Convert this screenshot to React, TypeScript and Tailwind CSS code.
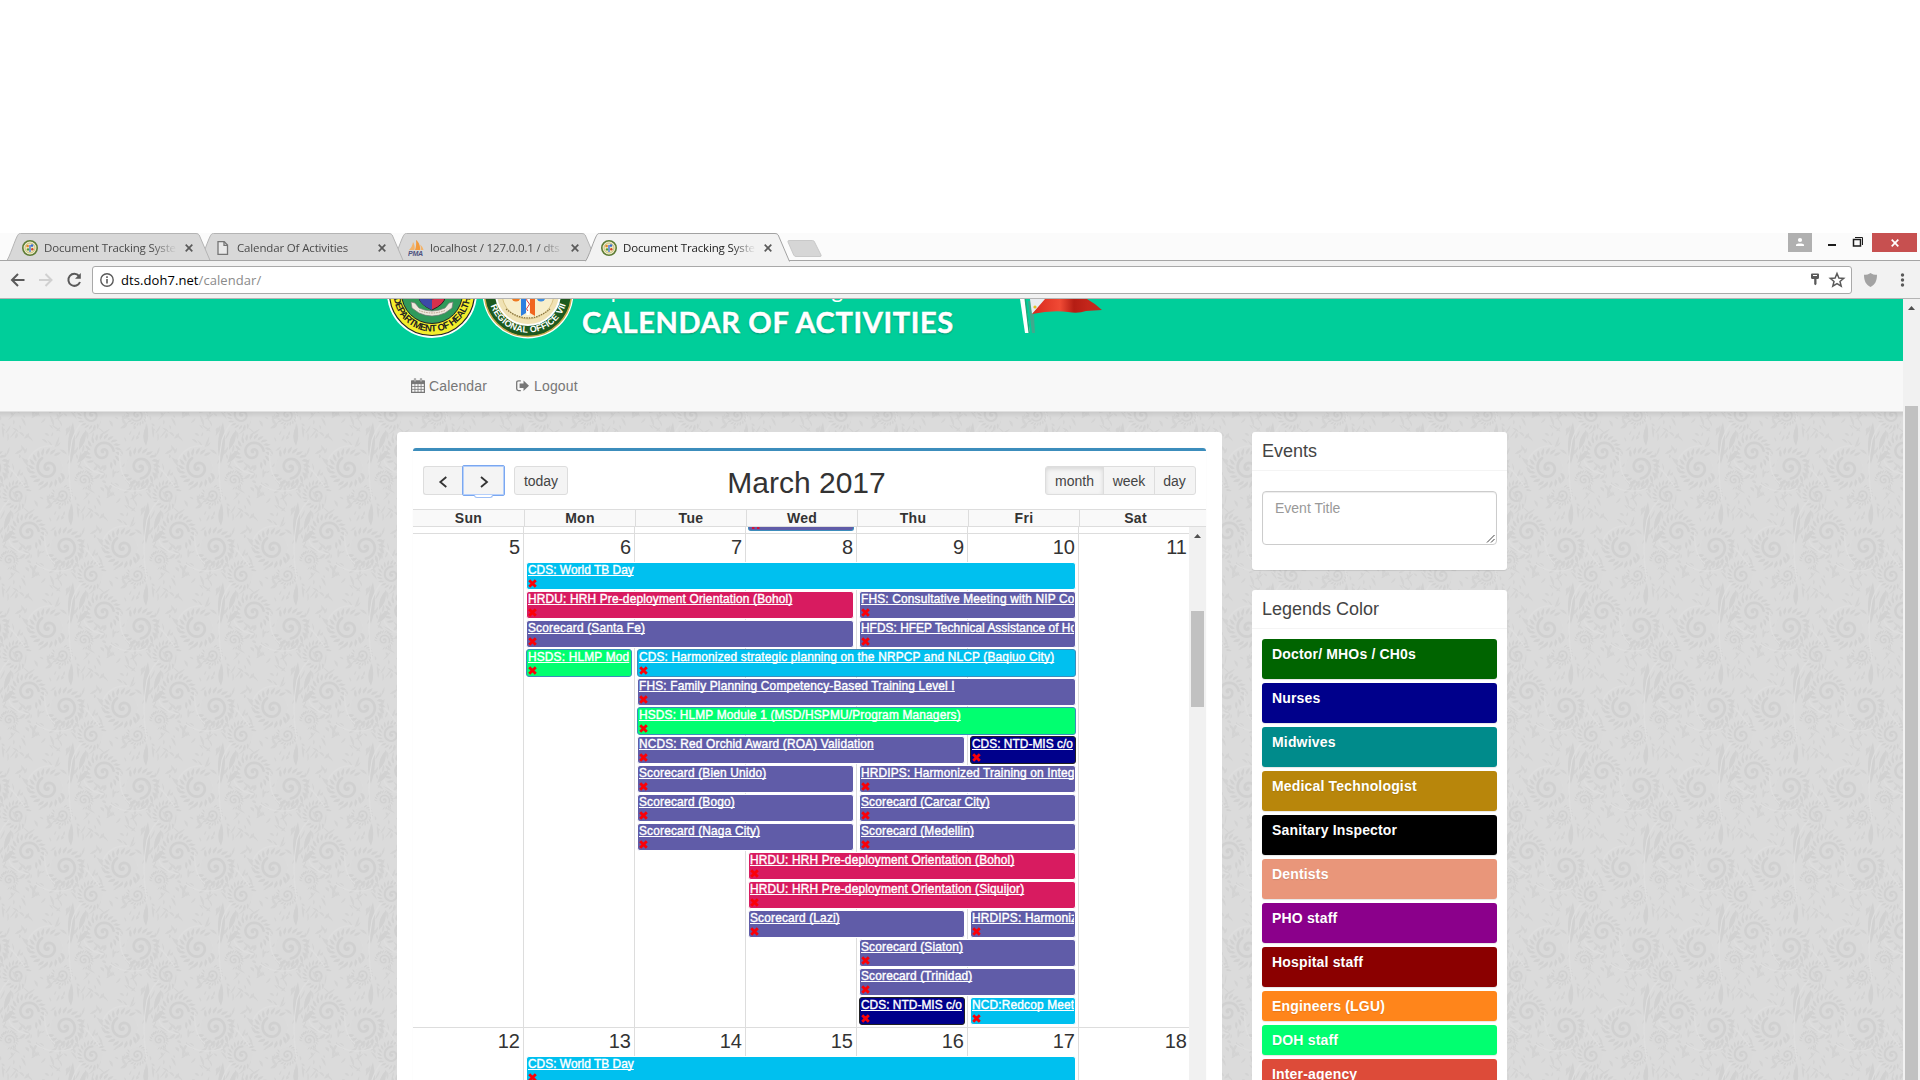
import { type ReactNode } from "react";

const ARIAL = "font-['Liberation_Sans',Arial,sans-serif]";
const UI = "font-['Open_Sans','Noto_Sans',sans-serif]";

/* ---------- browser chrome ---------- */

function SealIcon() {
  return (
    <svg width="16" height="16" viewBox="0 0 16 16" className="shrink-0">
      <circle cx="8" cy="8" r="7.2" fill="#f3efcf" stroke="#5d7c35" strokeWidth="1.6" />
      <circle cx="8" cy="8" r="5" fill="#f1e7b8" stroke="#a9a25c" strokeWidth=".6" />
      <circle cx="5.6" cy="6" r="1.3" fill="#e8862c" />
      <circle cx="10" cy="5.6" r="1.3" fill="#3b6fd0" />
      <path d="M8 5v7" stroke="#4b7fe0" strokeWidth="1.5" />
      <circle cx="6" cy="9.4" r="1.2" fill="#4aa03c" />
      <circle cx="10.3" cy="9.2" r="1.2" fill="#d0472c" />
    </svg>
  );
}

function PageIcon() {
  return (
    <svg width="16" height="16" viewBox="0 0 16 16" className="shrink-0" fill="none" stroke="#757575" strokeWidth="1.3">
      <path d="M3 1.7h6.2l3.3 3.4v9.3H3z" fill="#e9e9e9" />
      <path d="M9 1.7v3.6h3.5" />
    </svg>
  );
}

function PmaIcon() {
  return (
    <svg width="17" height="17" viewBox="0 0 17 17" className="-mr-px shrink-0">
      <path d="M1 11C3 9.500 4.500 6.500 5 3c1.500 2 2 5 1.500 8z" fill="#f3b36a" />
      <path d="M7 11C8 8.500 8.500 4.500 8 1c3 2 4.500 6.500 4 10z" fill="#f29a3c" />
      <path d="M12.600 11c.4-2 .2-4-.6-5.500 2 1.500 3 3.500 3.500 5.500z" fill="#f3b36a" />
      <text x="0" y="16.500" fontSize="7" letterSpacing="-.2" fontWeight="bold" fontStyle="italic" fontFamily="Liberation Sans" fill="#4c5280">
        PMA
      </text>
    </svg>
  );
}

function Cross({ color = "#5a5a5a" }: { color?: string }) {
  return (
    <svg width="8" height="8" viewBox="0 0 8 8" className="shrink-0">
      <path d="M.7.7l6.6 6.6M7.300.7L.7 7.300" stroke={color} strokeWidth="1.700" />
    </svg>
  );
}

function Tab({ icon, title, active, layer }: { icon: ReactNode; title: string; active?: boolean; layer: string }) {
  return (
    <div className={`${layer} relative -mr-[12px] w-[205px] shrink-0 ${active ? "h-[29px]" : "h-[28px]"}`}>
      <svg className="absolute inset-0" width="205" height={active ? 29 : 28} viewBox={active ? "0 0 205 29" : "0 0 205 28"}>
        <path
          d="M0 28.500C3 27 10 3 12.500 1.200Q13 .5 14.500.5H190Q192.500.5 193.200 2L204.500 28.500"
          fill={active ? "#f2f2f2" : "#d8d8d8"}
          stroke={active ? "#a2a2a2" : "#b4b4b4"}
        />
        {!active && <path d="M0 27.500h205" stroke="#a5a5a5" />}
      </svg>
      <div className="relative flex h-[28px] items-center pt-px pl-[16px]">
        {icon}
        <span
          className={`${UI} ml-[6px] w-[133px] overflow-hidden text-[11.500px] leading-[20px] tracking-[-0.150px] whitespace-nowrap [mask-image:linear-gradient(to_right,black_108px,transparent_133px)] ${active ? "text-[#222]" : "text-[#4a4a4a]"}`}
        >
          {title}
        </span>
        <span className="ml-[8px] flex">
          <Cross />
        </span>
      </div>
    </div>
  );
}

function TabStrip() {
  return (
    <div className="relative flex h-[28px] shrink-0 items-start bg-[#fbfbfb] pl-[6px] shadow-[inset_0_-1px_0_#a5a5a5]">
      <Tab layer="z-[3]" icon={<SealIcon />} title="Document Tracking System" />
      <Tab layer="z-[2]" icon={<PageIcon />} title="Calendar Of Activities" />
      <Tab layer="z-[1]" icon={<PmaIcon />} title="localhost / 127.0.0.1 / dts" />
      <Tab layer="z-[4]" icon={<SealIcon />} title="Document Tracking System" active />
      <svg className="mt-[7px] ml-[9px] shrink-0" width="36" height="18" viewBox="0 0 36 18">
        <path d="M2 .5H25.500q1.500 0 2 1.500L34 15q.6 1.500-1 1.500H9q-1.500 0-2.300-1.500L1 2Q.6.5 2 .5z" fill="#d6d6d6" stroke="#c9c9c9" />
      </svg>
      <div className="mr-[3px] ml-auto flex h-[19px] items-start">
        <div className="flex h-[19px] w-[24px] items-center justify-center bg-[#b0b0b0]">
          <svg width="10" height="10" viewBox="0 0 10 10" fill="#fff" className="-mt-[2px]">
            <circle cx="5" cy="3" r="2.100" />
            <path d="M1 9V7.500C2 6 8 6 9 7.500V9z" />
          </svg>
        </div>
        <svg width="60" height="19" viewBox="0 0 60 19" fill="none" stroke="#1c1c1c">
          <path d="M16 12h8" strokeWidth="2" />
          <path d="M41.500 6.500h7v6.500h-7z" strokeWidth="1.500" />
          <path d="M43 4.500h7.500V12" strokeWidth="1" />
        </svg>
        <div className="flex h-[19px] w-[45px] items-center justify-center bg-[#c75050]">
          <Cross color="#fff" />
        </div>
      </div>
    </div>
  );
}

function Toolbar() {
  return (
    <div className="flex h-[38px] shrink-0 items-center border-b border-[#b4b4b4] bg-[#f2f2f2] pl-[10px]">
      <svg width="76" height="20" viewBox="0 0 76 20" fill="none" className="shrink-0">
        <path d="M14.500 10H2M8 4l-6 6 6 6" stroke="#5a5a5a" strokeWidth="2" />
        <path d="M29 10h12.500M35.500 4l6 6-6 6" stroke="#d0d0d0" strokeWidth="2" />
        <path d="M69 6A6 6 0 1 0 70 12" stroke="#5a5a5a" strokeWidth="2" />
        <path d="M70.800 3V8.800H65z" fill="#5a5a5a" />
      </svg>
      <div className="ml-[6px] flex h-[28px] w-[1760px] shrink-0 items-center rounded-[3px] border border-[#a9a9a9] bg-white pl-[7px]">
        <svg width="14" height="14" viewBox="0 0 14 14" fill="none" stroke="#5a5a5a">
          <circle cx="7" cy="7" r="6.200" strokeWidth="1.400" />
          <path d="M7 6v4.500M7 3.300v1.600" strokeWidth="1.600" />
        </svg>
        <span className={`${UI} ml-[7px] text-[13px] leading-[20px] tracking-[0.070px] text-[#8a8a8a]`}>
          <span className="text-black">dts.doh7.net</span>/calendar/
        </span>
        <svg className="mr-[3px] ml-auto" width="40" height="18" viewBox="0 0 40 18">
          <path d="M3 3.500q0-1 1-1h6q1 0 1 1v3q0 1-1 1.500H8.500v5l-1 1.200-1.300-1V8H4Q3 7.500 3 6.500z" fill="#5a5a5a" />
          <path d="M5 4.500h4" stroke="#fff" />
          <path d="M29 2.500l1.900 4.500 4.800.4-3.700 3.100 1.200 4.700-4.200-2.500-4.200 2.500 1.200-4.700-3.700-3.100 4.800-.4z" fill="none" stroke="#5a5a5a" strokeWidth="1.500" />
        </svg>
      </div>
      <svg className="ml-[12px]" width="13" height="14" viewBox="0 0 13 14">
        <path d="M6.500 0C8 1.300 10.500 1.800 13 1.800 13 8 11 12 6.500 14 2 12 0 8 0 1.800 2.500 1.800 5 1.300 6.500 0z" fill="#a3a3a3" />
      </svg>
      <svg className="ml-[23px]" width="5" height="16" viewBox="0 0 5 16" fill="#5a5a5a">
        <circle cx="2.500" cy="3" r="1.700" />
        <circle cx="2.500" cy="8" r="1.700" />
        <circle cx="2.500" cy="13" r="1.700" />
      </svg>
    </div>
  );
}

/* ---------- site header ---------- */

function HealthSeal() {
  return (
    <svg width="90" height="90" viewBox="0 0 90 90" className="shrink-0">
      <defs>
        <path id="arcHealth" d="M6.500 45A38.500 38.500 0 0 0 83.500 45" />
      </defs>
      <circle cx="45" cy="45" r="45" fill="#fff" />
      <circle cx="45" cy="45" r="42.500" fill="#f4ee2c" stroke="#222" strokeWidth="1.200" />
      <circle cx="45" cy="45" r="30.500" fill="#2f9a5b" stroke="#222" strokeWidth="1" />
      <path d="M32 30h26v19q0 7-13 13-13-6-13-13z" fill="#d6304c" stroke="#222" />
      <path d="M32 30h13v32q-13-6-13-13z" fill="#3c4aa8" />
      <circle cx="45" cy="45" r="6" fill="#ececec" stroke="#444" />
      <path d="M24 54l4 1 4 5q13 6 26 0l4-5 4-1-1 6-7 5q-13 6-26 0l-7-5z" fill="#eee8dd" stroke="#777" strokeWidth=".7" />
      <path d="M32 62.500q13 5 26 0" fill="none" stroke="#b98" strokeDasharray="1.500 1" />
      <text fontFamily="Liberation Sans" fontWeight="bold" fontSize="9.500" fill="#222">
        <textPath href="#arcHealth" startOffset="5" textLength="111">
          DEPARTMENT OF HEALTH
        </textPath>
      </text>
    </svg>
  );
}

function RegionSeal() {
  return (
    <svg width="92" height="92" viewBox="0 0 92 92" className="shrink-0">
      <defs>
        <path id="arcRegion" d="M6.500 46A39.500 39.500 0 0 0 85.500 46" />
      </defs>
      <circle cx="46" cy="46" r="45.500" fill="#fff" />
      <circle cx="46" cy="46" r="43.500" fill="#1d5a1f" stroke="#c9a94a" strokeWidth="1.500" />
      <circle cx="46" cy="46" r="32" fill="#f0e2b4" stroke="#fff" strokeWidth="2" />
      <circle cx="46" cy="46" r="26" fill="#f7eecb" stroke="#cdb56c" strokeWidth=".7" />
      <circle cx="34" cy="50" r="4.500" fill="#ee7a22" />
      <circle cx="59" cy="50" r="4.500" fill="#3f8de0" />
      <path d="M39 46h5v20l-5 3z" fill="#2d7fe0" />
      <path d="M48 46h5v23l-5-3z" fill="#f0641e" />
      <path d="M46 46v22" stroke="#fff" strokeWidth="3" />
      <path d="M46 46q3 2 0 4.500t0 4.500 0 4.500 0 4.500" stroke="#d33" fill="none" />
      <path d="M24 62q22 18 44 0" stroke="#8a7640" strokeWidth="1.300" strokeDasharray="1.500 1" fill="none" />
      <circle cx="8.500" cy="50" r="1.600" fill="#fff" />
      <circle cx="83.500" cy="50" r="1.600" fill="#fff" />
      <text fontFamily="Liberation Sans" fontWeight="bold" fontSize="9" fill="#fff">
        <textPath href="#arcRegion" startOffset="13" textLength="99">
          REGIONAL OFFICE VII
        </textPath>
      </text>
    </svg>
  );
}

function Flag() {
  return (
    <svg width="90" height="36" viewBox="0 0 90 36" className="shrink-0">
      <defs>
        <linearGradient id="flagRed" x1="0" x2="1">
          <stop offset="0" stopColor="#d8281c" />
          <stop offset=".4" stopColor="#f04a35" />
          <stop offset=".6" stopColor="#b51d14" />
          <stop offset=".8" stopColor="#c4261b" />
          <stop offset="1" stopColor="#c02a20" />
        </linearGradient>
      </defs>
      <path d="M8 2h5l2 32h-3z" fill="#6d8f86" opacity=".6" />
      <path d="M0 0h5l5 34H5z" fill="#fff" />
      <path d="M4.500 0h1.500l4 34H8.500z" fill="#1da878" />
      <path d="M10 0h18L12 15z" fill="#e9ecef" />
      <circle cx="15" cy="8" r="1.600" fill="#e0c020" />
      <path d="M25 0L12 15Q32 11 48 13 58 15 66 12L82 11Q76 5 67 0z" fill="url(#flagRed)" />
    </svg>
  );
}

function Banner() {
  return (
    <div className="flex h-[62px] shrink-0 overflow-hidden bg-[#00ce9a] pl-[387px]">
      <div className="-mt-[51px] flex h-[92px] shrink-0">
        <HealthSeal />
        <div className="-mt-px ml-[5px]">
          <RegionSeal />
        </div>
      </div>
      <div className="-mt-[25px] ml-[8px] w-[438px] shrink-0 font-['Lato',sans-serif] whitespace-nowrap text-white">
        <div className="h-[30px] text-[22px] leading-[32px] tracking-[0.300px]">Department of Health Regional</div>
        <div className="text-[29px] leading-[36px] font-bold tracking-[0.630px] [-webkit-text-stroke:0.500px_white] [text-shadow:0_1px_2px_rgba(0,0,0,0.35)]">
          CALENDAR OF ACTIVITIES
        </div>
      </div>
      <Flag />
    </div>
  );
}

function Nav() {
  return (
    <div
      className={`${ARIAL} flex h-[51px] shrink-0 items-center border-b border-[#e0e0e0] bg-[#f8f8f8] pb-px pl-[411px] text-[14px] leading-[20px] tracking-[0.150px] text-[#777]`}
    >
      <svg width="14" height="15" viewBox="0 0 14 15" fill="none" stroke="#777">
        <path d="M.6 3h12.800v11.400H.6z" strokeWidth="1.200" />
        <path d="M.6 3h12.800v2.600H.6z" fill="#777" />
        <path d="M3.900 5.500v9M7 5.500v9M10.100 5.500v9M.6 8.500h12.800M.6 11.400h12.800" strokeWidth=".8" />
        <path d="M4 .5v3.500M10 .5v3.500" strokeWidth="2.200" />
        <path d="M4 1v2.500M10 1v2.500" stroke="#f8f8f8" strokeWidth=".8" />
      </svg>
      <span className="ml-[4px]">Calendar</span>
      <svg className="ml-[29px]" width="13" height="12" viewBox="0 0 13 12">
        <path d="M4.800.8H2.500Q.7.800.7 2.600v6.200q0 1.800 1.800 1.800h2.300" fill="none" stroke="#777" strokeWidth="1.300" />
        <path d="M7.500.4L13 5.700 7.500 11V8H3.600V3.400h3.900z" fill="#777" />
      </svg>
      <span className="ml-[5px]">Logout</span>
    </div>
  );
}

/* ---------- damask backdrop ---------- */

type Swirl = { x: number; y: number; r: number; a: number };

const SWIRLS: Swirl[] = [
  { x: 48, y: 68, r: 16, a: 0.4 },
  { x: 103, y: 52, r: 15, a: 2.4 },
  { x: 140, y: 67, r: 16, a: 4 },
  { x: 17, y: 95, r: 12, a: 1 },
  { x: 62, y: 95, r: 9, a: 5 },
  { x: 84, y: 80, r: 8, a: 3 },
];

function spiral({ x, y, r, a }: Swirl) {
  let d = "";
  for (let i = 0; i <= 36; i++) {
    const t = i / 36;
    const rr = r * 0.72 * t;
    const th = a + t * Math.PI * 3.2;
    d += `${i ? "L" : "M"}${(x + rr * Math.cos(th)).toFixed(1)} ${(y + rr * Math.sin(th)).toFixed(1)}`;
  }
  return d;
}

function petals({ x, y, r, a }: Swirl) {
  let d = "";
  for (let i = 0; i < 17; i++) {
    const th = a + i * 0.3;
    const p = (rad: number, o: number) => `${(x + rad * Math.cos(th + o)).toFixed(1)} ${(y + rad * Math.sin(th + o)).toFixed(1)}`;
    d += `M${p(r * 0.84, 0)}Q${p(r * 1.050, -0.14)} ${p(r * 1.28, 0.2)}Q${p(r * 1.020, 0.24)} ${p(r * 0.84, 0)}`;
  }
  return d;
}

/* Small leaves scattered between the swirls, from a fixed seed. */
function leaves() {
  let seed = 7;
  const rnd = () => {
    seed = (seed * 16807) % 2147483647;
    return seed / 2147483647;
  };
  let d = "";
  for (let i = 0; i < 210; i++) {
    const x = rnd() * 150;
    const y = 20 + rnd() * 80;
    const th = -1.57 + (rnd() - 0.5) * 2.2;
    const len = 4 + rnd() * 9;
    const w = 1.2 + rnd() * 1.6;
    if (SWIRLS.some((s) => Math.hypot(s.x - x, s.y - y) < s.r * 1.1)) continue;
    const ex = x + len * Math.cos(th);
    const ey = y + len * Math.sin(th);
    const nx = -Math.sin(th) * w;
    const ny = Math.cos(th) * w;
    const mx = (x + ex) / 2;
    const my = (y + ey) / 2;
    d += `M${x.toFixed(1)} ${y.toFixed(1)}Q${(mx + nx * 1.6).toFixed(1)} ${(my + ny * 1.6).toFixed(1)} ${ex.toFixed(1)} ${ey.toFixed(1)}Q${(mx - nx * 0.5).toFixed(1)} ${(my - ny * 0.5).toFixed(1)} ${x.toFixed(1)} ${y.toFixed(1)}`;
  }
  return d;
}

const LEAVES = leaves();

function Motif() {
  return (
    <g>
      <path d={LEAVES} fill="#d3d3d3" />
      <path d="M71 64Q64 44 73 22 78 44 71 64zM79 50Q78 38 86 30 87 42 79 50zM77 63Q80 53 88 50 87 60 77 63zM146 46Q140 36 147 24 150 36 146 46z" fill="#d1d1d1" />
      {SWIRLS.map((s, i) => (
        <g key={i}>
          <circle cx={s.x} cy={s.y} r={s.r * 0.9} fill="#dadada" />
          <path d={spiral(s)} fill="none" stroke="#d0d0d0" strokeWidth={s.r / 6} strokeLinecap="round" />
          <path d={petals(s)} fill="#d1d1d1" />
        </g>
      ))}
      <path
        d="M72 100Q66 70 72 40 76 28 84 20M110 84Q128 96 148 88M0 60Q14 70 24 86M120 52Q118 74 130 84M28 60Q36 44 54 46M84 60Q88 72 104 74"
        fill="none"
        stroke="#dfdfdf"
        strokeWidth="1.200"
      />
    </g>
  );
}

function Backdrop() {
  return (
    <svg className="absolute inset-0" width="1903" height="668">
      <defs>
        <pattern id="damask" width="150" height="160" patternUnits="userSpaceOnUse" y="-12">
          {[
            [0, 0],
            [-150, 0],
            [150, 0],
            [75, 80],
            [-75, 80],
            [75, -80],
            [-75, -80],
            [0, 160],
            [0, -160],
          ].map(([x, y]) => (
            <g key={`${x},${y}`} transform={`translate(${x} ${y})`}>
              <Motif />
            </g>
          ))}
        </pattern>
        <linearGradient id="shade" x2="0" y2="1">
          <stop offset="0" stopColor="#000" stopOpacity=".08" />
          <stop offset="1" stopColor="#000" stopOpacity="0" />
        </linearGradient>
      </defs>
      <rect width="1903" height="668" fill="#dbdbdb" />
      <rect width="1903" height="668" fill="url(#damask)" />
      <rect width="1903" height="6" fill="url(#shade)" />
    </svg>
  );
}

/* ---------- calendar ---------- */

type Ev = { row: number; from: number; days: number; tone: string; title: string; tight?: boolean };

const PURPLE = "bg-[#605ca8] border-white";
const CYAN = "bg-[#00c0ef] border-white";
const PINK = "bg-[#d81b60] border-white";
const GREEN_B = "bg-[#01ff70] border-[#3c8dbc]";
const CYAN_B = "bg-[#00c0ef] border-[#3c8dbc]";
const NAVY_B = "bg-[#00008b] border-[#222]";

const EVENTS: Ev[] = [
  { row: 1, from: 1, days: 5, tone: CYAN, title: "CDS: World TB Day", tight: true },
  { row: 2, from: 1, days: 3, tone: PINK, title: "HRDU: HRH Pre-deployment Orientation (Bohol)" },
  { row: 2, from: 4, days: 2, tone: PURPLE, title: "FHS: Consultative Meeting with NIP Co" },
  { row: 3, from: 1, days: 3, tone: PURPLE, title: "Scorecard (Santa Fe)" },
  { row: 3, from: 4, days: 2, tone: PURPLE, title: "HFDS: HFEP Technical Assistance of Ho", tight: true },
  { row: 4, from: 1, days: 1, tone: GREEN_B, title: "HSDS: HLMP Mod" },
  { row: 4, from: 2, days: 4, tone: CYAN_B, title: "CDS: Harmonized strategic planning on the NRPCP and NLCP (Baqiuo City)" },
  { row: 5, from: 2, days: 4, tone: PURPLE, title: "FHS: Family Planning Competency-Based Training Level I" },
  { row: 6, from: 2, days: 4, tone: GREEN_B, title: "HSDS: HLMP Module 1 (MSD/HSPMU/Program Managers)" },
  { row: 7, from: 2, days: 3, tone: PURPLE, title: "NCDS: Red Orchid Award (ROA) Validation" },
  { row: 7, from: 5, days: 1, tone: NAVY_B, title: "CDS: NTD-MIS c/o", tight: true },
  { row: 8, from: 2, days: 2, tone: PURPLE, title: "Scorecard (Bien Unido)" },
  { row: 8, from: 4, days: 2, tone: PURPLE, title: "HRDIPS: Harmonized Training on Integ" },
  { row: 9, from: 2, days: 2, tone: PURPLE, title: "Scorecard (Bogo)" },
  { row: 9, from: 4, days: 2, tone: PURPLE, title: "Scorecard (Carcar City)" },
  { row: 10, from: 2, days: 2, tone: PURPLE, title: "Scorecard (Naga City)" },
  { row: 10, from: 4, days: 2, tone: PURPLE, title: "Scorecard (Medellin)" },
  { row: 11, from: 3, days: 3, tone: PINK, title: "HRDU: HRH Pre-deployment Orientation (Bohol)" },
  { row: 12, from: 3, days: 3, tone: PINK, title: "HRDU: HRH Pre-deployment Orientation (Siquijor)" },
  { row: 13, from: 3, days: 2, tone: PURPLE, title: "Scorecard (Lazi)" },
  { row: 13, from: 5, days: 1, tone: PURPLE, title: "HRDIPS: Harmoniz" },
  { row: 14, from: 4, days: 2, tone: PURPLE, title: "Scorecard (Siaton)" },
  { row: 15, from: 4, days: 2, tone: PURPLE, title: "Scorecard (Trinidad)" },
  { row: 16, from: 4, days: 1, tone: NAVY_B, title: "CDS: NTD-MIS c/o", tight: true },
  { row: 16, from: 5, days: 1, tone: CYAN, title: "NCD:Redcop Meet" },
];

const NEXT_WEEK: Ev[] = [{ row: 1, from: 1, days: 5, tone: CYAN, title: "CDS: World TB Day", tight: true }];

function EventBar({ ev }: { ev: Ev }) {
  return (
    <div
      className={`${ev.tone} mr-[3px] ml-[2px] h-[28px] min-w-0 overflow-hidden rounded-[3px] border px-px text-[11.900px] leading-[14px] text-white ${ev.tight ? "tracking-[0.030px]" : "tracking-[0.170px]"}`}
      style={{ gridRow: ev.row + 1, gridColumn: `${ev.from + 1} / span ${ev.days}` }}
    >
      <div className="h-[14px] overflow-hidden whitespace-nowrap underline decoration-1 underline-offset-[1px] [-webkit-text-stroke:0.400px_white] [text-decoration-skip-ink:none]">
        {ev.title}
      </div>
      <svg className="mt-[2px]" width="9" height="9" viewBox="0 0 9 9">
        <path d="M1.200 1.200l6.600 6.600M7.800 1.200L1.200 7.800" stroke="#fb0007" strokeWidth="2.800" />
      </svg>
    </div>
  );
}

function Week({ first, events }: { first: number; events: Ev[] }) {
  return (
    <div className="grid h-[494px] shrink-0 grid-cols-[repeat(6,111px)_110px] grid-rows-[28px_repeat(16,29px)_1px] border-t border-[#ddd]">
      {[0, 1, 2, 3, 4, 5, 6].map((i) => (
        <div
          key={i}
          className={`border-[#ddd] text-right text-[20px] leading-[26px] text-[#333] ${i < 6 ? "border-r pr-[3px]" : "pr-[2px]"}`}
          style={{ gridRow: "1 / -1", gridColumn: i + 1 }}
        >
          {first + i}
        </div>
      ))}
      {events.map((ev, i) => (
        <EventBar key={i} ev={ev} />
      ))}
    </div>
  );
}

const BTN = "flex h-[29px] items-center justify-center border border-[#ddd] bg-[#f4f4f4] pt-px text-[14px] text-[#444]";

function CalendarToolbar() {
  return (
    <div className="grid h-[58px] shrink-0 grid-cols-3 items-start px-[10px] pt-[15px]">
      <div className="flex">
        <div className={`${BTN} w-[39px] rounded-l-[3px] border-r-0`}>
          <svg width="10" height="12" viewBox="0 0 10 12" className="mt-[2px] mr-px">
            <path d="M8.300 1L2.300 6l6 5" fill="none" stroke="#333" strokeWidth="1.800" />
          </svg>
        </div>
        <div className={`${BTN} relative -mt-px -mb-px h-[31px] w-[43px] rounded-[2px] border-[#7aa7f0]! shadow-[inset_0_0_0_1px_#b5cffa]`}>
          <svg width="10" height="12" viewBox="0 0 10 12" className="mt-[2px] ml-px">
            <path d="M2 1l6 5-6 5" fill="none" stroke="#333" strokeWidth="1.800" />
          </svg>
          <div className="absolute top-full left-[11px] h-[3px] w-[19px] rounded-b-[3px] border border-t-0 border-[#9dbff7] bg-white" />
        </div>
        <div className={`${BTN} ml-[9px] w-[54px] rounded-[3px]`}>today</div>
      </div>
      <h2 className="pr-[6px] text-center text-[30px] leading-[33px] text-[#333]">March 2017</h2>
      <div className="flex justify-end">
        <div className={`${BTN} w-[59px] rounded-l-[3px] bg-[#ececec] shadow-[inset_0_2px_4px_rgba(0,0,0,0.12)]`}>month</div>
        <div className={`${BTN} -ml-px w-[52px]`}>week</div>
        <div className={`${BTN} -ml-px w-[42px] rounded-r-[3px] pr-px`}>day</div>
      </div>
    </div>
  );
}

function CalendarCard() {
  return (
    <div className="h-[700px] w-[825px] shrink-0 rounded-[4px] bg-white p-[16px]">
      <div className="flex h-full w-[793px] flex-col rounded-[3px] border-t-[3px] border-[#3c8dbc] shadow-[0_0_1px_rgba(0,0,0,0.1)]">
        <CalendarToolbar />
        <div className="grid h-[18px] shrink-0 grid-cols-[repeat(6,111px)_127px] border-y border-[#ddd] bg-[#f9f9f9] text-center text-[14px] leading-[16px] font-bold tracking-[0.300px] text-[#333]">
          {["Sun", "Mon", "Tue", "Wed", "Thu", "Fri", "Sat"].map((d, i) => (
            <div key={d} className={i === 0 ? "" : i === 6 ? "border-l border-[#ddd] pr-[15px]" : "border-l border-[#ddd]"}>
              {d}
            </div>
          ))}
        </div>
        <div className="flex min-h-0 flex-1">
          <div className="flex w-[776px] shrink-0 flex-col overflow-hidden">
            <div className="grid h-[6px] shrink-0 grid-cols-[repeat(6,111px)_110px] overflow-hidden">
              {[0, 1, 2, 3, 4, 5, 6].map((i) => (
                <div key={i} className={i < 6 ? "border-r border-[#ddd] px-[2px]" : ""}>
                  {i === 3 && (
                    <div className="h-[4px] rounded-b-[3px] border border-t-0 border-[#3c8dbc] bg-[#605ca8] pl-[2px]">
                      <svg width="9" height="2" viewBox="0 0 9 2">
                        <path d="M1 1h2.500M6 1h2.500" stroke="#d3123b" strokeWidth="2" />
                      </svg>
                    </div>
                  )}
                </div>
              ))}
            </div>
            <Week first={5} events={EVENTS} />
            <Week first={12} events={NEXT_WEEK} />
          </div>
          <div className="w-[17px] bg-[#f1f1f1]">
            <svg className="mt-[7px] ml-[5px]" width="7" height="4" viewBox="0 0 7 4">
              <path d="M0 4L3.500 0 7 4z" fill="#505050" />
            </svg>
            <div className="mt-[73px] ml-[2px] h-[96px] w-[13px] bg-[#c1c1c1]" />
          </div>
        </div>
      </div>
    </div>
  );
}

/* ---------- sidebar ---------- */

const LEGEND = [
  { label: "Doctor/ MHOs / CH0s", tone: "bg-[#006400] h-[40px]" },
  { label: "Nurses", tone: "bg-[#00008b] h-[40px]" },
  { label: "Midwives", tone: "bg-[#008b8b] h-[40px]" },
  { label: "Medical Technologist", tone: "bg-[#b8860b] h-[40px]" },
  { label: "Sanitary Inspector", tone: "bg-black h-[40px]" },
  { label: "Dentists", tone: "bg-[#e9967a] h-[40px]" },
  { label: "PHO staff", tone: "bg-[#8b008b] h-[40px]" },
  { label: "Hospital staff", tone: "bg-[#8b0000] h-[40px]" },
  { label: "Engineers (LGU)", tone: "bg-[#ff851b] h-[30px]" },
  { label: "DOH staff", tone: "bg-[#01ff70] h-[30px]" },
  { label: "Inter-agency", tone: "bg-[#dd4b39] h-[30px]" },
];

function Sidebar() {
  return (
    <div className="flex w-[255px] shrink-0 flex-col gap-[20px]">
      <div className="h-[138px] shrink-0 rounded-[3px] bg-white shadow-[0_1px_1px_rgba(0,0,0,0.1)]">
        <h3 className="h-[39px] border-b border-[#f4f4f4] px-[10px] text-[18px] leading-[38px] text-[#444]">Events</h3>
        <div className="px-[10px] pt-[20px]">
          <div className="flex h-[54px] justify-between rounded-[4px] border border-[#ccc] pl-[12px] text-[14px] leading-[20px] text-[#999] shadow-[inset_0_1px_1px_rgba(0,0,0,0.075)]">
            <span className="pt-[6px]">Event Title</span>
            <svg className="self-end" width="10" height="10" viewBox="0 0 10 10" stroke="#444" strokeWidth="1">
              <path d="M1 8.500L8.500 1M5 8.500L8.500 5" />
            </svg>
          </div>
        </div>
      </div>
      <div className="shrink-0 rounded-[3px] bg-white pb-[30px]">
        <h3 className="h-[39px] border-b border-[#f4f4f4] px-[10px] text-[18px] leading-[38px] text-[#444]">Legends Color</h3>
        <div className="flex flex-col gap-[4px] px-[10px] pt-[10px]">
          {LEGEND.map((l) => (
            <div
              key={l.label}
              className={`${l.tone} shrink-0 rounded-[3px] px-[10px] pt-[5px] text-[14px] leading-[20px] font-bold tracking-[0.170px] text-white shadow-[0_1px_1px_rgba(0,0,0,0.1)] [text-shadow:0_1px_1px_rgba(0,0,0,0.1)]`}
            >
              {l.label}
            </div>
          ))}
        </div>
      </div>
    </div>
  );
}

export default function App() {
  return (
    <div className="flex h-[1080px] w-[1920px] flex-col overflow-hidden bg-white pt-[233px]">
      <TabStrip />
      <Toolbar />
      <div className="flex min-h-0 flex-1">
        <div className="flex w-[1903px] shrink-0 flex-col overflow-hidden">
          <Banner />
          <Nav />
          <div className={`${ARIAL} relative min-h-0 flex-1 overflow-hidden`}>
            <Backdrop />
            <div className="relative flex items-start gap-[30px] pt-[20px] pl-[397px]">
              <CalendarCard />
              <Sidebar />
            </div>
          </div>
        </div>
        <div className="flex w-[17px] flex-col items-center bg-[#f1f1f1] pt-[7px]">
          <svg width="7" height="4" viewBox="0 0 7 4" className="shrink-0">
            <path d="M0 4L3.500 0 7 4z" fill="#505050" />
          </svg>
          <div className="mt-[96px] w-[13px] flex-1 bg-[#c1c1c1]" />
        </div>
      </div>
    </div>
  );
}
